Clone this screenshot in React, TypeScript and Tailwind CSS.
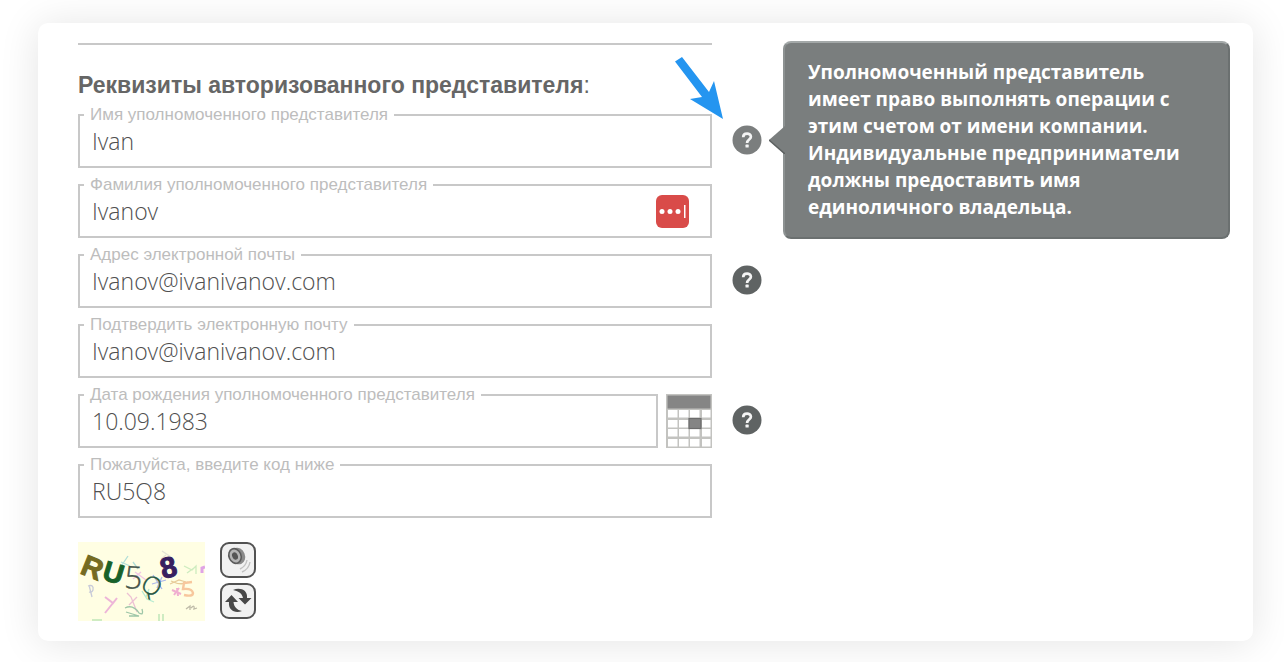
import { useState } from 'react';
import type { ReactNode } from 'react';

type FieldProps = {
  id: string;
  label: string;
  initial: string;
  children?: ReactNode;
};

function Field({ id, label, initial, children }: FieldProps) {
  const [value, setValue] = useState(initial);

  return (
    <fieldset className="min-w-0 flex-1 h-[62px] border-2 border-[#c8c8c8]">
      <legend className="ml-1 px-1.5 text-[17px] leading-[18px] text-[#bdbdbd]">
        <label htmlFor={id}>{label}</label>
      </legend>
      <div className="flex h-[34px] items-center">
        <input
          id={id}
          type="text"
          value={value}
          onChange={(e) => setValue(e.target.value)}
          className="min-w-0 flex-1 px-3 font-['Open_Sans'] text-[23px] leading-8 font-light text-[#4f4f4f] outline-none"
        />
        {children}
      </div>
    </fieldset>
  );
}

function Row({ children, help }: { children: ReactNode; help?: ReactNode }) {
  return (
    <div className="grid grid-cols-[minmax(0,1fr)_30px] gap-5">
      <div className="flex gap-2">{children}</div>
      {help}
    </div>
  );
}

function HelpButton({ active = false }: { active?: boolean }) {
  return (
    <button
      type="button"
      aria-label="Помощь"
      className={`mt-[19px] flex size-[30px] items-center justify-center rounded-full ${active ? 'text-[#7b7e7e]' : 'text-[#5f6363]'}`}
    >
      <svg viewBox="0 0 30 30" className="size-[30px]">
        <circle cx="15" cy="15" r="14.5" fill="currentColor" />
        <path d="M11.2 12.2 C11.2 7.6 18.9 7.6 18.9 11.8 C18.9 14.6 15.1 14.6 15.1 18" fill="none" stroke="#f4f4f4" strokeWidth="2.7" />
        <rect x="13.5" y="19.6" width="3.2" height="3" rx="0.6" fill="#f4f4f4" />
      </svg>
    </button>
  );
}

function CalendarIcon() {
  return (
    <svg viewBox="0 0 46 54" className="h-[54px] w-[46px]">
      <rect width="46" height="54" fill="#c3c3c0" />
      <rect x="1.5" y="1.5" width="43" height="13" fill="#858585" />
      {[16, 26, 35, 45].map((y) =>
        [2, 13, 24, 36].map((x) => (
          <rect key={`${x}-${y}`} x={x} y={y} width={x === 36 ? 8.5 : 9.5} height="7.5" fill="#ffffff" />
        )),
      )}
      <rect x="23" y="24.5" width="12" height="10" fill="#858585" stroke="#6c6c6c" strokeWidth="1.2" />
    </svg>
  );
}

function CaptchaImage() {
  return (
    <svg viewBox="0 0 127 79" className="h-[79px] w-[127px]" role="img" aria-label="Код">
      <rect width="127" height="79" fill="#fffee3" />
      <g fill="none" strokeWidth="1.3" opacity="0.55">
        <path d="M27 55 l8 6 4 -5 M35 61 l-8 10" stroke="#e07ad0" strokeWidth="2" />
        <path d="M49 51 l4 4 6 15 M51 63 l8 -8" stroke="#e08fc8" />
        <path d="M47 66 q8 -4 14 5 q5 3 3 -4 M48 70 l13 4 -10 0" stroke="#4f9a78" />
        <path d="M11 43 l3 12 M10 44 q6 -2 5 4 q-1 3 -4 2" stroke="#9aa0d0" />
        <path d="M42 26 l8 -12 M43 20 l9 4 M55 20 l5 7" stroke="#72c6cf" />
        <path d="M75 33 l9 14 M74 42 l14 -4 M79 46 l5 -11" stroke="#6a7df0" />
        <path d="M57 30 l11 8 M55 37 l8 -7" stroke="#e79be4" />
        <path d="M92 42 l9 -4 7 2 M93 39 q10 5 17 1" stroke="#d6a45f" />
        <path d="M94 48 l9 4 M96 53 l5 -7 M99 46 l1 8" stroke="#e56fc1" strokeWidth="2" />
        <path d="M114 40 l-8 1 -1 6 q9 -1 10 4 q0 4 -9 2" stroke="#f29b64" strokeWidth="2.4" />
        <path d="M108 67 l4 -3 0 4 M113 66 q4 -4 3 1 l3 -1" stroke="#8a8478" />
        <path d="M106 24 l8 4 4 -4 0 8 M109 31 l7 -5" stroke="#a5dfa2" />
        <path d="M64 49 l5 8 7 3 M71 47 l-3 8" stroke="#7fddc4" />
        <path d="M84 9 l9 6 M83 17 l5 -4" stroke="#cccccc" />
        <path d="M124 31 v-5 l3 -1" stroke="#c75ae8" strokeWidth="3" />
        <path d="M14 78 h10 M81 72 v7 M85 72 v7" stroke="#a8dfa8" strokeWidth="2" />
      </g>
      <g fontFamily="Liberation Sans" fontWeight="bold">
        <text x="1" y="31" fontSize="29" fill="#756b22" stroke="#756b22" transform="rotate(22 1 31)">R</text>
        <text x="23" y="37" fontSize="28" fill="#176129" stroke="#176129" transform="rotate(17 23 37)">U</text>
        <text x="85" y="37" fontSize="29" fill="#37205f" stroke="#37205f" transform="rotate(-14 85 37)">8</text>
      </g>
      <g fontFamily="Open Sans" fontWeight="300">
        <text x="46" y="46" fontSize="31" fill="#45534a" stroke="#45534a" strokeWidth="0.4" transform="rotate(3 46 46)">5</text>
        <text x="61" y="46" fontSize="25" fill="#23543e" stroke="#23543e" strokeWidth="0.4" transform="rotate(32 61 46)">Q</text>
      </g>
    </svg>
  );
}

function Captcha() {
  return (
    <div className="mt-6 flex gap-[15px]">
      <CaptchaImage />
      <div className="flex flex-col gap-[5px]">
        <button type="button" aria-label="Прослушать код" className="size-9 rounded-[9px] border-2 border-[#525252] bg-[#f1f1f1]">
          <svg viewBox="0 0 32 32" className="size-8">
            <ellipse cx="16" cy="12" rx="7" ry="8.5" fill="#8a8a8a" transform="rotate(-22 16 12)" />
            <ellipse cx="13" cy="12" rx="6" ry="7.5" fill="#b4b4b4" stroke="#5c5c5c" strokeWidth="1.6" transform="rotate(-22 13 12)" />
            <ellipse cx="13" cy="12" rx="2.8" ry="3.8" fill="#555555" transform="rotate(-22 13 12)" />
            <path d="M18 25 Q24 22 25 16 M20 28 Q27 25 28 18" fill="none" stroke="#c2c2c2" strokeWidth="1.4" />
          </svg>
        </button>
        <button type="button" aria-label="Обновить код" className="size-9 rounded-[9px] border-2 border-[#525252] bg-[#f1f1f1]">
          <svg viewBox="0 0 32 32" className="size-8" fill="#484848">
            <path d="M11 5 C18 2 26 5 25 13 L29.500 13 L23 19.500 L16.500 13 L21 13 C20 8 16 6 11 5 Z" />
            <path d="M20 26 C13 29 6 25 7 17 L3 17 L9.500 10 L16 17 L11.500 17 C12 22 15 25 20 26 Z" />
          </svg>
        </button>
      </div>
    </div>
  );
}

function HelpTooltip() {
  return (
    <aside
      role="tooltip"
      className="relative h-[198px] w-[447px] shrink-0 rounded-lg border-2 border-t-[#a3a8a8] border-r-[#6b7070] border-b-[#6b7070] border-l-[#8d9292] bg-[#7a7e7e] px-[23px] py-4 font-['Open_Sans'] text-[19px] leading-[27px] font-bold text-white"
    >
      <svg viewBox="0 0 16 28" className="absolute top-[83px] -left-4 h-7 w-4">
        <path d="M16 0 L0 14 L16 28 Z" fill="#7a7e7e" />
        <path d="M0 14 L16 28" stroke="#5c6060" strokeWidth="1.5" />
      </svg>
      Уполномоченный представитель
      <br />
      имеет право выполнять операции с
      <br />
      этим счетом от имени компании.
      <br />
      Индивидуальные предприниматели
      <br />
      должны предоставить имя
      <br />
      единоличного владельца.
    </aside>
  );
}

export default function App() {
  return (
    <div className="bg-white pt-[23px] pr-[31px] pb-[21px] pl-[38px] font-['Liberation_Sans',sans-serif]">
      <main className="flex items-start gap-[21px] rounded-[10px] bg-white pt-[18px] pr-[23px] pb-5 pl-10 shadow-[0_2px_40px_rgba(0,0,0,0.11)]">
        <form className="relative min-w-0 flex-1 pt-0.5" onSubmit={(e) => e.preventDefault()}>
          <hr className="mr-[50px] border-t-2 border-[#c8c8c8]" />
          <h2 className="mt-[25px] mb-1.5 text-[23px] leading-[30px] whitespace-nowrap text-[#666666]">
            <strong>Реквизиты авторизованного представителя</strong>:
          </h2>

          <div className="flex flex-col gap-2">
            <Row help={<HelpButton active />}>
              <Field id="first-name" label="Имя уполномоченного представителя" initial="Ivan" />
            </Row>
            <Row>
              <Field id="last-name" label="Фамилия уполномоченного представителя" initial="Ivanov">
                <button type="button" aria-label="Менеджер паролей" className="mr-[21px] size-[33px] rounded-md bg-[#d94b49]">
                  <svg viewBox="0 0 33 33" fill="#ffffff">
                    <circle cx="6" cy="16.500" r="2.500" />
                    <circle cx="14" cy="16.500" r="2.500" />
                    <circle cx="22" cy="16.500" r="2.500" />
                    <rect x="28" y="10" width="1.500" height="13" />
                  </svg>
                </button>
              </Field>
            </Row>
            <Row help={<HelpButton />}>
              <Field id="email" label="Адрес электронной почты" initial="Ivanov@ivanivanov.com" />
            </Row>
            <Row>
              <Field id="email-confirm" label="Подтвердить электронную почту" initial="Ivanov@ivanivanov.com" />
            </Row>
            <Row help={<HelpButton />}>
              <Field id="birth-date" label="Дата рождения уполномоченного представителя" initial="10.09.1983" />
              <button type="button" aria-label="Выбрать дату" className="mt-2">
                <CalendarIcon />
              </button>
            </Row>
            <Row>
              <Field id="captcha-code" label="Пожалуйста, введите код ниже" initial="RU5Q8" />
            </Row>
          </div>

          <Captcha />

          <svg viewBox="0 0 48 62" className="pointer-events-none absolute top-4 right-[39px] h-[62px] w-12" fill="#2495f0">
            <path d="M0 4.500 L7 0 L34 35 L39 24 L48 62 L15 42 L27 40 Z" />
          </svg>
        </form>

        <HelpTooltip />
      </main>
    </div>
  );
}
